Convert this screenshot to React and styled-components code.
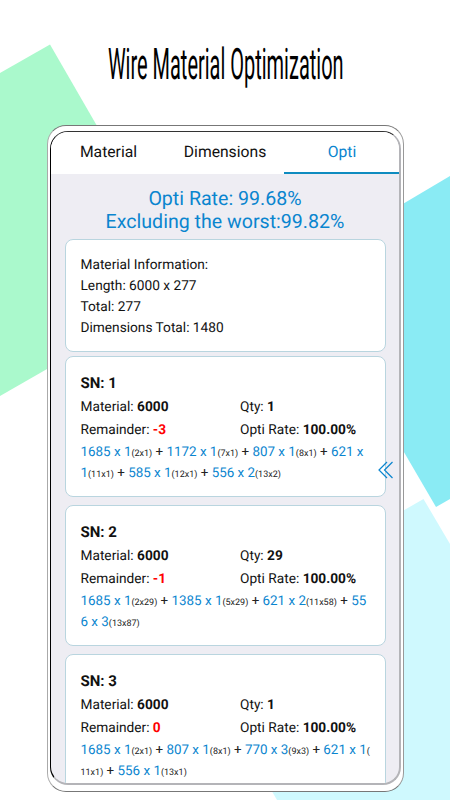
import styled, { createGlobalStyle } from 'styled-components';

const tabs = ['Material', 'Dimensions', 'Opti'];

const info = ['Material Information:', 'Length: 6000 x 277', 'Total: 277', 'Dimensions Total: 1480'];

// every plan is a list of lines, every line a list of [kind, text]
const results = [
  {
    sn: 1,
    material: 6000,
    qty: 1,
    remainder: '-3',
    rate: '100.00%',
    lines: [
      [['cut', '1685 x 1'], ['note', '(2x1)'], ['plus', ' + '], ['cut', '1172 x 1'], ['note', '(7x1)'], ['plus', ' + '], ['cut', '807 x 1'], ['note', '(8x1)'], ['plus', ' + '], ['cut', '621 x']],
      [['cut', '1'], ['note', '(11x1)'], ['plus', ' + '], ['cut', '585 x 1'], ['note', '(12x1)'], ['plus', ' + '], ['cut', '556 x 2'], ['note', '(13x2)']],
    ],
  },
  {
    sn: 2,
    material: 6000,
    qty: 29,
    remainder: '-1',
    rate: '100.00%',
    lines: [
      [['cut', '1685 x 1'], ['note', '(2x29)'], ['plus', ' + '], ['cut', '1385 x 1'], ['note', '(5x29)'], ['plus', ' + '], ['cut', '621 x 2'], ['note', '(11x58)'], ['plus', ' + '], ['cut', '55']],
      [['cut', '6 x 3'], ['note', '(13x87)']],
    ],
  },
  {
    sn: 3,
    material: 6000,
    qty: 1,
    remainder: '0',
    rate: '100.00%',
    lines: [
      [['cut', '1685 x 1'], ['note', '(2x1)'], ['plus', ' + '], ['cut', '807 x 1'], ['note', '(8x1)'], ['plus', ' + '], ['cut', '770 x 3'], ['note', '(9x3)'], ['plus', ' + '], ['cut', '621 x 1'], ['note', '(']],
      [['note', '11x1)'], ['plus', ' + '], ['cut', '556 x 1'], ['note', '(13x1)']],
    ],
  },
];

const ResultCard = ({ sn, material, qty, remainder, rate, lines }) => {
  return (
    <Card>
      <h3>SN: {sn}</h3>
      <Fields>
        <span>
          Material: <b>{material}</b>
        </span>
        <span>
          Qty: <b>{qty}</b>
        </span>
        <span>
          Remainder: <Remainder>{remainder}</Remainder>
        </span>
        <span>
          Opti Rate: <b>{rate}</b>
        </span>
      </Fields>
      {lines.map((line, index) => (
        <PlanLine key={index}>
          {line.map(([kind, text], i) => (
            <Part key={i} $kind={kind}>
              {text}
            </Part>
          ))}
        </PlanLine>
      ))}
    </Card>
  );
};

const App = () => {
  return (
    <Page>
      <GlobalStyle />
      <Backdrop viewBox="0 0 450 800">
        <path d="M0 73 50 44.5 190 287 0 396Z" fill="#aaf9cc" />
        <path d="M380 217.5 450 176V499L436 507 380 411Z" fill="#8aebf4" />
        <path d="M230 610 423.5 499 450 544V800H277L230 719Z" fill="#cff9fe" />
      </Backdrop>
      <Title>
        <span>Wire Material Optimization</span>
      </Title>
      <Phone>
        <Screen>
          <TabBar>
            {tabs.map((tab) => (
              <Tab key={tab} $active={tab === 'Opti'}>
                {tab}
              </Tab>
            ))}
          </TabBar>
          <Summary>
            <p>Opti Rate: 99.68%</p>
            <p>Excluding the worst:99.82%</p>
          </Summary>
          <Cards>
            <InfoCard>
              {info.map((line) => (
                <p key={line}>{line}</p>
              ))}
            </InfoCard>
            {results.map((result) => (
              <ResultCard key={result.sn} {...result} />
            ))}
          </Cards>
        </Screen>
        <Collapse viewBox="0 0 15 18">
          <path d="M9 1 1 9l8 8M14.5 1 6.5 9l8 8" />
        </Collapse>
      </Phone>
    </Page>
  );
};

const GlobalStyle = createGlobalStyle`
  * {
    box-sizing: border-box;
    margin: 0;
    padding: 0;
  }
  body {
    background: #fff;
    font-family: Roboto, 'Liberation Sans', sans-serif;
    text-rendering: geometricPrecision;
  }
`;

const Page = styled.main`
  position: relative;
  width: 450px;
  height: 800px;
  overflow: hidden;
  display: flex;
  flex-direction: column;
  color: #111;
`;

const Backdrop = styled.svg`
  position: absolute;
  inset: 0;
  width: 450px;
  height: 800px;
  z-index: -1;
`;

const Title = styled.h1`
  height: 125px;
  flex-shrink: 0;
  padding: 39px 0 0 1px;
  display: flex;
  justify-content: center;
  font-size: 43.5px;
  font-weight: 400;
  line-height: 51px;
  white-space: nowrap;
  color: #000;
  span {
    transform: scaleX(0.459);
  }
`;

const Phone = styled.section`
  position: relative;
  width: 357px;
  height: 667px;
  margin-left: 47px;
  padding: 5px 2px 6px;
  flex-shrink: 0;
  background: #fff;
  border: 1px solid #777;
  border-left-color: #aaa;
  border-right-color: #999;
  border-radius: 19px;
`;

const Screen = styled.div`
  height: 654px;
  overflow: hidden;
  background: #eeedf3;
  border: 1px solid #333;
  border-left-color: #000;
  border-right: 2px solid #b4b4b8;
  border-bottom: 2px solid #b4b4b8;
  border-radius: 18px;
`;

const TabBar = styled.nav`
  display: grid;
  grid-template-columns: 115px 118px 1fr;
  height: 42px;
  background: #fff;
`;

const Tab = styled.div`
  display: flex;
  align-items: center;
  justify-content: center;
  padding-left: ${({ $active }) => ($active ? '1px' : '0')};
  padding-bottom: 1px;
  font-size: 15.7px;
  color: ${({ $active }) => ($active ? '#0a85cf' : '#111')};
  border-bottom: 2px solid ${({ $active }) => ($active ? '#0e8cc0' : '#fff')};
`;

const Summary = styled.div`
  padding-top: 13px;
  height: 65px;
  text-align: center;
  font-size: 19.6px;
  line-height: 23px;
  color: #0a85cf;
`;

const Cards = styled.div`
  display: flex;
  flex-direction: column;
  gap: 8px;
  padding: 0 13px 0 14px;
`;

const Card = styled.article`
  height: 141px;
  flex-shrink: 0;
  padding: 15px 15px 0 14.5px;
  background: #fff;
  border: 1px solid #b9d5df;
  border-radius: 8px;
  font-size: 13.7px;
  line-height: 21px;
  white-space: nowrap;
  h3 {
    font-size: 15px;
    line-height: 22px;
    font-weight: 700;
  }
`;

const InfoCard = styled(Card)`
  height: 113px;
  margin-bottom: -4px;
  padding-top: 15px;
`;

const Fields = styled.div`
  display: grid;
  grid-template-columns: 159.5px 1fr;
  padding: 2px 0 1px;
  line-height: 22.5px;
`;

const Remainder = styled.b`
  color: #f00;
`;

const PlanLine = styled.div`
  white-space: pre;
  height: 21px;
  font-size: 13.4px;
`;

const Part = styled.span`
  color: ${({ $kind }) => ($kind === 'cut' ? '#0a85cf' : '#222')};
  font-size: ${({ $kind }) => ($kind === 'note' ? '9px' : 'inherit')};
`;

const Collapse = styled.svg`
  position: absolute;
  left: 330px;
  top: 335px;
  width: 15px;
  height: 18px;
  fill: none;
  stroke: #0a85cf;
  stroke-width: 1.2;
`;

export default App;
